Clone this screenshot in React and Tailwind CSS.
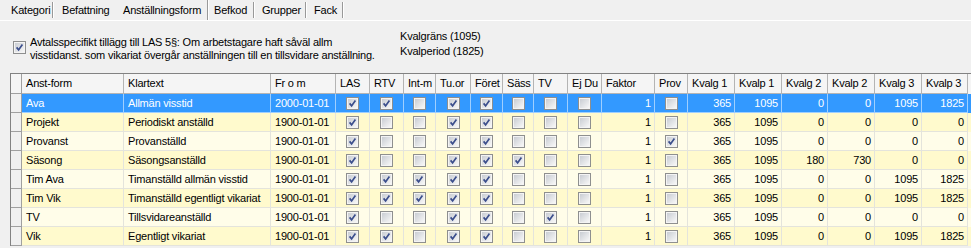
import React from "react";

const COLS =
  "grid grid-cols-[11px_102px_147px_65px_34px_34px_32px_35px_32px_31px_34px_34px_53px_33px_47px_47px_46px_47px_47px_46px]";

const headers = [
  "Anst-form", "Klartext", "Fr o m", "LAS", "RTV", "Int-m", "Tu.or", "Föret", "Säss", "TV", "Ej Du",
  "Faktor", "Prov", "Kvalg 1", "Kvalp 1", "Kvalg 2", "Kvalp 2", "Kvalg 3", "Kvalp 3",
];

const rows = [
  ["Ava", "Allmän visstid", "2000-01-01", [1, 1, 0, 1, 1, 0, 0, 0], 1, 0, [365, 1095, 0, 0, 1095, 1825]],
  ["Projekt", "Periodiskt anställd", "1900-01-01", [1, 0, 0, 1, 1, 0, 0, 0], 1, 0, [365, 1095, 0, 0, 0, 0]],
  ["Provanst", "Provanställd", "1900-01-01", [1, 0, 0, 1, 1, 0, 0, 0], 1, 1, [365, 1095, 0, 0, 0, 0]],
  ["Säsong", "Säsongsanställd", "1900-01-01", [1, 0, 0, 1, 1, 1, 0, 0], 1, 0, [365, 1095, 180, 730, 0, 0]],
  ["Tim Ava", "Timanställd allmän visstid", "1900-01-01", [1, 1, 1, 1, 1, 0, 0, 0], 1, 0, [365, 1095, 0, 0, 1095, 1825]],
  ["Tim Vik", "Timanställd egentligt vikariat", "1900-01-01", [1, 1, 1, 1, 1, 0, 0, 0], 1, 0, [365, 1095, 0, 0, 1095, 1825]],
  ["TV", "Tillsvidareanställd", "1900-01-01", [1, 0, 0, 1, 1, 0, 1, 0], 1, 0, [365, 1095, 0, 0, 0, 0]],
  ["Vik", "Egentligt vikariat", "1900-01-01", [1, 1, 0, 1, 1, 0, 0, 0], 1, 0, [365, 1095, 0, 0, 1095, 1825]],
];

function Check({ on }) {
  return (
    <svg width="13" height="13" viewBox="0 0 13 13" className="block shrink-0">
      <defs>
        <linearGradient id="cbfill" x1="0" y1="0" x2="1" y2="1">
          <stop offset="0" stopColor="#c9cdd3" />
          <stop offset="1" stopColor="#f7f7f7" />
        </linearGradient>
      </defs>
      <rect x="0.5" y="0.5" width="12" height="12" fill="#f4f4f4" stroke="#8e8f8f" />
      <rect x="2" y="2" width="9" height="9" fill="url(#cbfill)" />
      {on ? (
        <path d="M3.6 6.4 L5.6 8.9 L9.4 3.4" fill="none" stroke="#3b4e8c" strokeWidth="1.7" />
      ) : null}
    </svg>
  );
}

function Sep({ full }) {
  return (
    <span className={full ? "flex self-stretch" : "flex self-center h-[16px]"}>
      <span className="w-px bg-[#999999]" />
      <span className="w-px bg-white" />
    </span>
  );
}

function Tab({ label, w, pl, sep = true, selected = false }) {
  return (
    <div className={`flex items-center ${w}`}>
      <span className={`flex-1 whitespace-nowrap ${pl}`}>{label}</span>
      {sep ? <Sep full={selected} /> : null}
    </div>
  );
}

function GridRow({ row, selected, odd }) {
  const [code, text, date, checks, faktor, prov, nums] = row;
  const bg = selected ? "bg-[#3399ff] text-white" : odd ? "bg-[#fffacd]" : "bg-[#fffde9]";
  const line = selected ? "border-[#9fcfff]" : "border-[#e4e4dc]";
  const cell = `h-[19px] border-r border-b ${line} flex items-center`;
  return (
    <div className={`${COLS} ${bg}`}>
      <div className="h-[19px] bg-[#f0f0f0] border-r border-b border-[#a0a0a0]" />
      <div className={`${cell} pl-[4px] whitespace-nowrap overflow-hidden`}>{code}</div>
      <div className={`${cell} pl-[4px] whitespace-nowrap overflow-hidden`}>{text}</div>
      <div className={`${cell} pl-[4px] whitespace-nowrap overflow-hidden`}>{date}</div>
      {checks.map((c, i) => (
        <div key={i} className={`${cell} justify-center`}>
          <Check on={c === 1} />
        </div>
      ))}
      <div className={`${cell} justify-end pr-[3px]`}>{faktor}</div>
      <div className={`${cell} justify-center`}>
        <Check on={prov === 1} />
      </div>
      {nums.map((n, i) => (
        <div key={i} className={`${cell} justify-end pr-[3px]`}>{n}</div>
      ))}
    </div>
  );
}

export default function App() {
  return (
    <div className="w-[971px] h-[248px] overflow-hidden bg-[#f0f0f0] text-black text-[11px] tracking-[-0.2px] font-['Liberation_Sans',Arial,sans-serif]">
      <div className="flex h-[21px] pl-[4px] border-b border-white">
        <Tab label="Kategori" w="w-[50px]" pl="pl-[7px]" />
        <Tab label="Befattning" w="w-[64px]" pl="pl-[8px]" sep={false} />
        <Tab label="Anställningsform" w="w-[91px]" pl="pl-[5px]" selected />
        <Tab label="Befkod" w="w-[46px]" pl="pl-[5px]" />
        <Tab label="Grupper" w="w-[52px]" pl="pl-[7px]" />
        <Tab label="Fack" w="w-[37px]" pl="pl-[7px]" />
      </div>

      <div className="flex h-[52px]">
        <div className="flex items-start w-[396px] pl-[13px] pt-[15px] gap-[4px]">
          <div className="mt-[5px]">
            <Check on />
          </div>
          <div className="leading-[13px] whitespace-nowrap">
            <div>Avtalsspecifikt tillägg till LAS 5§: Om arbetstagare haft såväl allm</div>
            <div>visstidanst. som vikariat övergår anställningen till en tillsvidare anställning.</div>
          </div>
        </div>
        <div className="pl-[4px] pt-[8px] leading-[15px] whitespace-nowrap">
          <div>Kvalgräns (1095)</div>
          <div>Kvalperiod (1825)</div>
        </div>
      </div>

      <div className="ml-[10px] w-[961px] border-l border-t border-[#828282] bg-white">
        <div className={`${COLS} bg-[#f5f5f5]`}>
          <div className="h-[20px] border-r border-b border-[#a0a0a0]" />
          {headers.map((h) => (
            <div
              key={h}
              className="h-[20px] border-r border-b border-[#b4b4b4] flex items-center pl-[4px] whitespace-nowrap overflow-hidden"
            >
              {h}
            </div>
          ))}
        </div>
        {rows.map((r, i) => (
          <GridRow key={r[0]} row={r} selected={i === 0} odd={i % 2 === 1} />
        ))}
      </div>
    </div>
  );
}
